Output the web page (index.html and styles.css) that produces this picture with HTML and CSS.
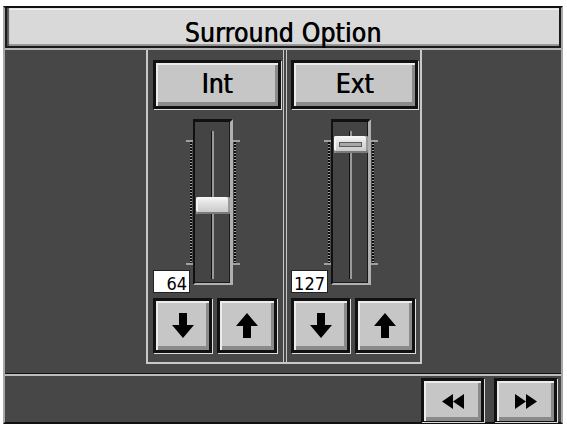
FILE: index.html
```html
<!DOCTYPE html>
<html>
<head>
<meta charset="utf-8">
<link rel="stylesheet" href="styles.css">
</head>
<body>
<div class="screen">
  <div class="title">Surround Option</div>
  <div class="main">
    <div class="panel">
      <div class="col col-int">
        <div class="btn btn-label btn-label-int">Int</div>
        <div class="slider-row">
          <div class="value">64</div>
          <div class="ticks ticks-left"><i class="dash"></i><i class="dots"></i><i class="dash"></i></div>
          <div class="track"><div class="groove"></div><div class="knob" style="top:75px"></div></div>
          <div class="ticks ticks-right"><i class="dash"></i><i class="dots"></i><i class="dash"></i></div>
        </div>
        <div class="arrow-row">
          <div class="btn btn-arrow btn-down"><svg width="22" height="25" viewBox="0 0 22 25"><path d="M7 0h8v12h7L11 25 0 12h7z" fill="#000"/></svg></div>
          <div class="btn btn-arrow btn-up"><svg width="22" height="25" viewBox="0 0 22 25"><path d="M7 25h8V13h7L11 0 0 13h7z" fill="#000"/></svg></div>
        </div>
      </div>
      <div class="col col-ext">
        <div class="btn btn-label btn-label-ext">Ext</div>
        <div class="slider-row">
          <div class="value">127</div>
          <div class="ticks ticks-left"><i class="dash"></i><i class="dots"></i><i class="dash"></i></div>
          <div class="track"><div class="groove"></div><div class="knob knob-grip" style="top:14px"></div></div>
          <div class="ticks ticks-right"><i class="dash"></i><i class="dots"></i><i class="dash"></i></div>
        </div>
        <div class="arrow-row">
          <div class="btn btn-arrow btn-down"><svg width="22" height="25" viewBox="0 0 22 25"><path d="M7 0h8v12h7L11 25 0 12h7z" fill="#000"/></svg></div>
          <div class="btn btn-arrow btn-up"><svg width="22" height="25" viewBox="0 0 22 25"><path d="M7 25h8V13h7L11 0 0 13h7z" fill="#000"/></svg></div>
        </div>
      </div>
    </div>
  </div>
  <div class="bar">
    <div class="btn btn-nav"><svg width="22" height="15" viewBox="0 0 22 15"><path d="M0 7.5 11 0v15zM11 7.5 22 0v15z" fill="#000"/></svg></div>
    <div class="btn btn-nav"><svg width="22" height="15" viewBox="0 0 22 15"><path d="M22 7.5 11 0v15zM11 7.5 0 0v15z" fill="#000"/></svg></div>
  </div>
</div>
</body>
</html>
```
FILE: styles.css
```css
body {
  margin: 0;
  background: #ffffff;
  font-family: "DejaVu Sans Condensed", "DejaVu Sans", sans-serif;
  font-stretch: condensed;
}

.screen {
  margin: 6px 0 0 3px;
  width: 560px;
  height: 418px;
  box-sizing: border-box;
  border-style: solid;
  border-width: 2px;
  border-color: #111 #a8a8a8 #111 #a8a8a8;
  background: #474747;
  display: flex;
  flex-direction: column;
}

.title {
  height: 40px;
  box-sizing: border-box;
  background: #d9d9d9;
  border-left: 2px solid #1a1a1a;
  border-right: 2px solid #1a1a1a;
  border-bottom: 2px solid #1a1a1a;
  box-shadow: inset 2px 0 1px #555, inset 0 2px 0 #f2f2f2, inset 0 -2px 0 #9a9a9a;
  padding-top: 6px;
  line-height: 38px;
  font-size: 26px;
  letter-spacing: 0.3px;
  text-align: center;
  color: #000;
  text-shadow: 0.7px 0 0 #000;
}

.main {
  height: 326px;
  box-sizing: border-box;
  border-top: 2px solid #b4b4b4;
  border-bottom: 1px solid #111;
  display: flex;
  justify-content: center;
  align-items: flex-start;
}

.panel {
  width: 276px;
  margin-left: 2px;
  box-sizing: border-box;
  border-left: 2px solid #c8c8c8;
  border-right: 2px solid #c8c8c8;
  border-bottom: 2px solid #c8c8c8;
  display: flex;
}

.col {
  padding-top: 10px;
  padding-bottom: 9px;
  display: flex;
  flex-direction: column;
}

.col-int {
  width: 130px;
  padding-left: 5px;
  border-right: 1px solid #c8c8c8;
  margin-right: 2px;
}

.col-ext {
  flex: 1;
  padding-left: 4px;
  border-left: 1px solid #c8c8c8;
}

.btn {
  box-sizing: border-box;
  border: 3px solid #111;
  background: #c6c6c6;
  box-shadow: 1px 1px 0 #dcdcdc, inset 2px 2px 0 #ececec, inset -3px -4px 0 #8a8a8a;
  display: flex;
  align-items: center;
  justify-content: center;
}

.btn-label {
  height: 49px;
  font-size: 26px;
  line-height: 43px;
  color: #000;
  text-shadow: 0.7px 0 0 #000;
}

.btn-label-int {
  width: 128px;
}

.btn-label-ext {
  width: 127px;
}

.slider-row {
  margin-top: 10px;
  height: 174px;
  display: flex;
  align-items: stretch;
}

.value {
  width: 37px;
  height: 23px;
  align-self: flex-end;
  margin-right: -4px;
  box-sizing: border-box;
  border: 1px solid #222;
  background: #fff;
  padding: 2px 2px 0 0;
  text-align: right;
  font-size: 18px;
  line-height: 21px;
  color: #000;
  position: relative;
}

.ticks {
  width: 7px;
  display: flex;
  flex-direction: column;
  padding: 21px 0 20px;
  height: 166px;
  box-sizing: border-box;
}

.dash {
  display: block;
  height: 2px;
  width: 100%;
  background: #a0a0a0;
}

.dots {
  display: block;
  flex: 1;
  width: 2px;
  background: repeating-linear-gradient(to bottom, #0e0e0e 0 2px, #a4a4a4 2px 3px);
}

.ticks-left .dots {
  align-self: flex-end;
  margin-right: 1px;
}

.ticks-right .dots {
  align-self: flex-start;
  margin-left: 1px;
}

.track {
  width: 40px;
  height: 166px;
  box-sizing: border-box;
  border-style: solid;
  border-width: 3px 3px 2px 2px;
  border-color: #111 #b0b0b0 #b0b0b0 #111;
  box-shadow: inset -1px -1px 0 #1a1a1a;
  background: #444;
  position: relative;
  display: flex;
  justify-content: center;
  padding: 9px 0 4px;
}

.groove {
  width: 2px;
  background: #9a9a9a;
  border-left: 1px solid #111;
}

.knob {
  position: absolute;
  left: 1px;
  right: 0;
  height: 17px;
  border-radius: 2px;
  background: linear-gradient(to bottom, #fafafa 0, #e2e2e2 35%, #c4c4c4 100%);
  box-shadow: inset 0 -2px 0 #7a7a7a, inset 2px 0 0 #f4f4f4, inset -2px 0 0 #9a9a9a;
}

.knob-grip::after {
  content: "";
  position: absolute;
  left: 5px;
  right: 6px;
  top: 6px;
  height: 3px;
  border: 1px solid #5a5a5a;
  background: #a8a8a8;
}

.arrow-row {
  margin-top: 5px;
  display: flex;
  gap: 5px;
}

.btn-arrow {
  height: 55px;
}

.btn-down {
  width: 59px;
}

.btn-up {
  width: 60px;
}

.bar {
  flex: 1;
  box-sizing: border-box;
  border-top: 2px solid #bdbdbd;
  display: flex;
  justify-content: flex-end;
  gap: 10px;
  padding: 2px 4px 0 0;
}

.btn-nav {
  width: 63px;
  height: 44px;
  border-bottom-width: 1px;
}
```
